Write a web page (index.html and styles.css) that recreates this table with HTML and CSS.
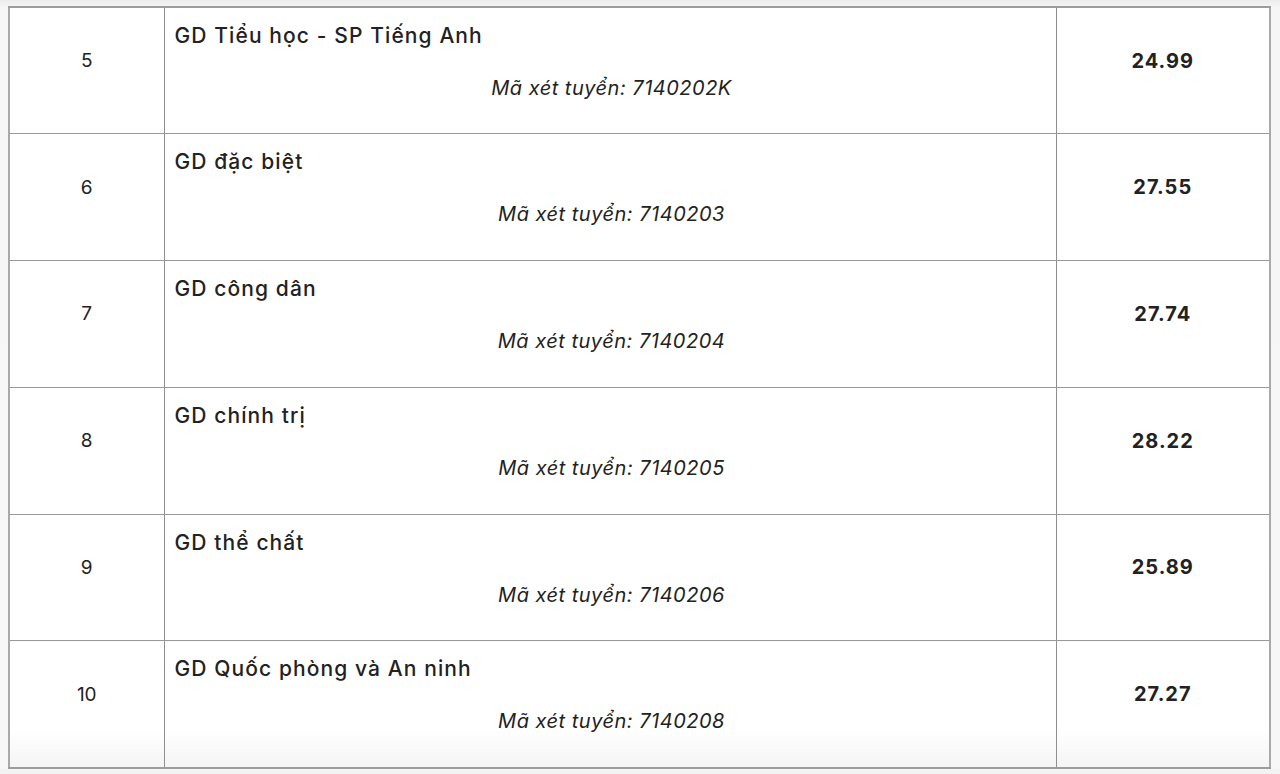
FILE: index.html
```html
<!DOCTYPE html>
<html lang="vi">
<head>
<meta charset="utf-8">
<title>Điểm chuẩn</title>
<link rel="stylesheet" href="styles.css">
</head>
<body>
<div class="frame">
<table class="scores">
  <colgroup>
    <col class="c-no">
    <col class="c-name">
    <col class="c-score">
  </colgroup>
  <tbody>
    <tr>
      <td class="no">5</td>
      <td class="name"><div class="title">GD Tiểu học - SP Tiếng Anh</div><div class="code">Mã xét tuyển: 7140202K</div></td>
      <td class="score">24.99</td>
    </tr>
    <tr>
      <td class="no">6</td>
      <td class="name"><div class="title">GD đặc biệt</div><div class="code">Mã xét tuyển: 7140203</div></td>
      <td class="score">27.55</td>
    </tr>
    <tr>
      <td class="no">7</td>
      <td class="name"><div class="title">GD công dân</div><div class="code">Mã xét tuyển: 7140204</div></td>
      <td class="score">27.74</td>
    </tr>
    <tr>
      <td class="no">8</td>
      <td class="name"><div class="title">GD chính trị</div><div class="code">Mã xét tuyển: 7140205</div></td>
      <td class="score">28.22</td>
    </tr>
    <tr>
      <td class="no">9</td>
      <td class="name"><div class="title">GD thể chất</div><div class="code">Mã xét tuyển: 7140206</div></td>
      <td class="score">25.89</td>
    </tr>
    <tr>
      <td class="no">10</td>
      <td class="name"><div class="title">GD Quốc phòng và An ninh</div><div class="code">Mã xét tuyển: 7140208</div></td>
      <td class="score">27.27</td>
    </tr>
  </tbody>
</table>
</div>
</body>
</html>
```
FILE: styles.css
```css
html, body {
  margin: 0;
  padding: 0;
  background: #f3f3f3;
}
body {
  font-family: Inter, "Noto Sans", "Liberation Sans", sans-serif;
  color: #222;
  height: 774px;
  overflow: hidden;
}
.frame {
  padding: 6px 9px 0 8px;
  background: linear-gradient(#ececec, #f6f6f6 8px, #f7f7f7);
}
.scores {
  width: 1263px;
  border-collapse: collapse;
  table-layout: fixed;
  background: #fff;
  border-left: 2px solid #a9a9a9;
  border-right: 2px solid #a9a9a9;
}
.c-no { width: 155px; }
.c-name { width: 892px; }
.c-score { width: 214px; }
.scores td {
  border-top: 1px solid #999;
  border-bottom: 1px solid #999;
  height: 127px;
  box-sizing: border-box;
  padding: 0;
}
.scores tr:nth-child(odd) td {
  height: 126.6px;
}
.scores td + td {
  border-left: 1px solid #8f8f8f;
}
.scores tr:first-child td {
  border-top: 2px solid #9c9c9c;
}
.scores tr:last-child td {
  border-bottom: 2px solid #9c9c9c;
  background: linear-gradient(#fff 70%, #f4f4f4);
}
.no {
  text-align: center;
  vertical-align: middle;
  font-size: 19px;
  font-weight: 400;
  padding-bottom: 20px !important;
}
.score {
  text-align: center;
  vertical-align: middle;
  font-size: 20px;
  font-weight: 700;
  padding-bottom: 20px !important;
  letter-spacing: 1px;
}
.name {
  vertical-align: top;
  padding: 13px 10px 0 10px !important;
}
.title {
  font-size: 21px;
  font-weight: 500;
  line-height: 30px;
  letter-spacing: 1.1px;
}
.code {
  margin-top: 23px;
  text-align: center;
  font-size: 20px;
  font-style: italic;
  line-height: 28px;
  letter-spacing: 0.5px;
  padding-left: 3px;
}
```
